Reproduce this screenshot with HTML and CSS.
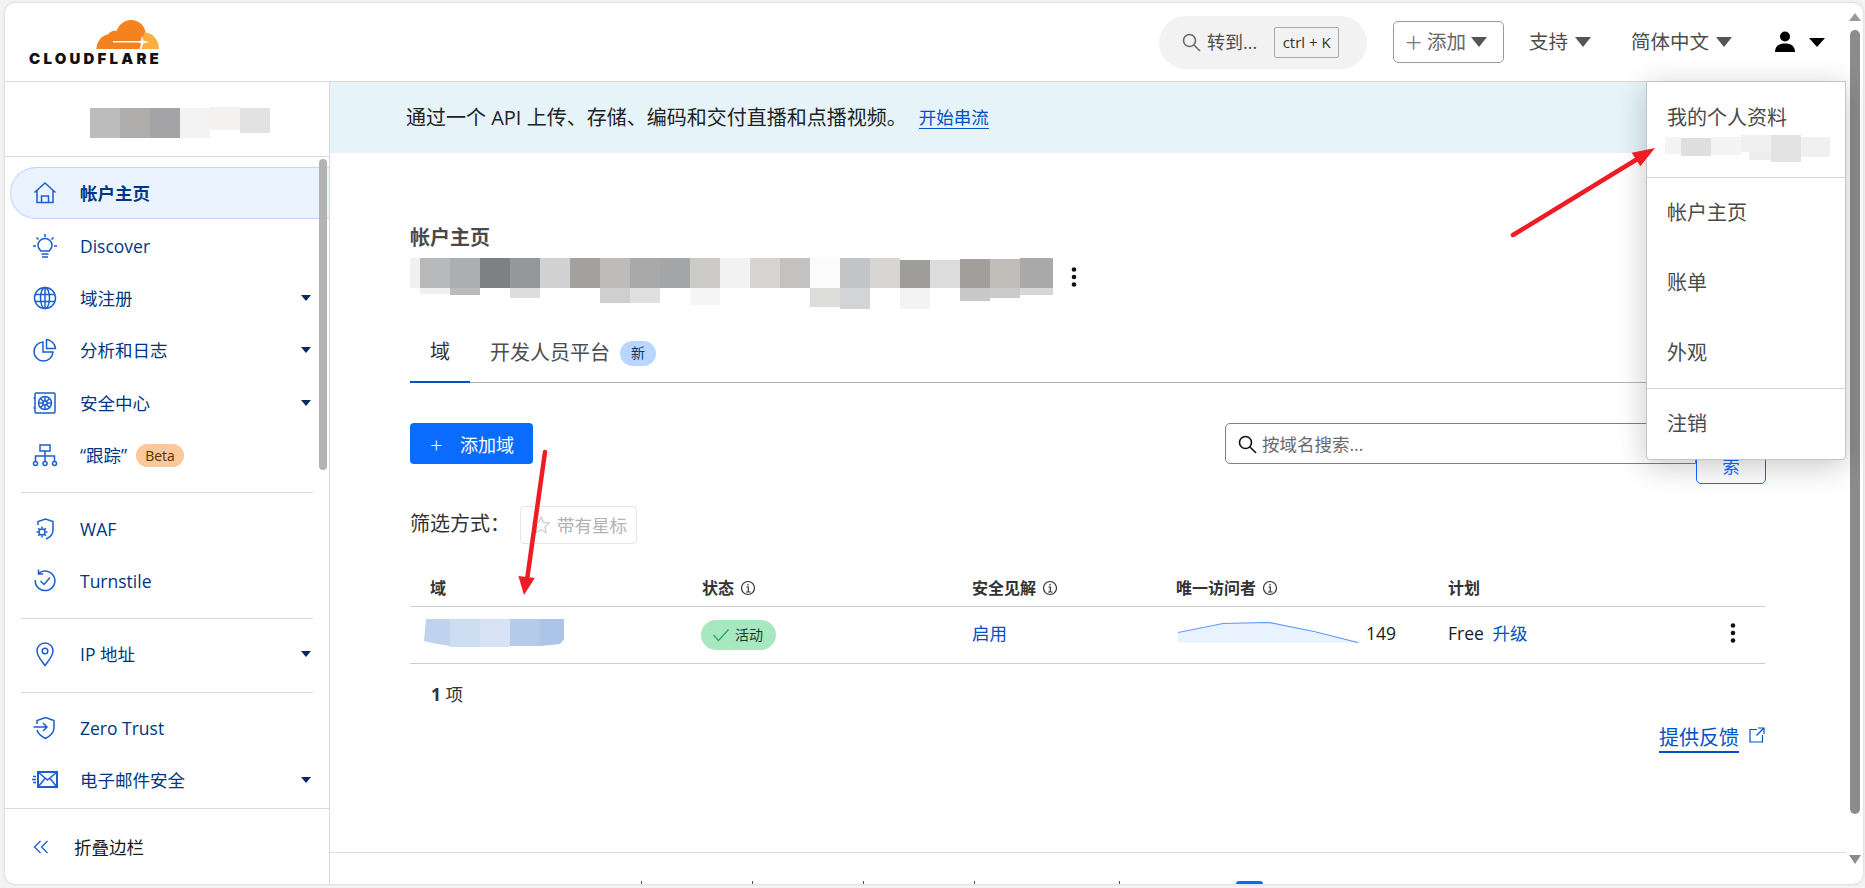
FILE: index.html
```html
<!DOCTYPE html>
<html lang="zh-CN">
<head>
    <meta charset="UTF-8">
    <title>Cloudflare</title>
    <link rel="stylesheet" href="styles.css">
</head>
<body>
    <div class="window">
        <div class="page">
            <div class="header">
                <div class="logo">
                    <svg class="logo-cloud" viewBox="0 0 63 29">
                        <path fill="#f6821f" d="M.4 29C.8 22 5 15.500 12 14.600 14 11.500 17.500 10.200 20.500 11.200 23 4.500 28.500 0 35.200 0 42.500 0 48 5 49.500 11.500L46.500 20.500 44.500 29Z"/>
                        <path fill="#fbad41" d="M48.500 12.500C56.500 12.500 63 20 63 29H43.500L45.300 24.500 50 21.800 46 20.200Z"/>
                        <path fill="none" stroke="#fff" stroke-width="1.500" d="M17 21.800H43.500"/>
                        <path fill="#fff" d="M46 15.500 47.200 20.600 53 22 47.200 23.400 45.500 29H43.600L45 23.400 42 22 45 20.600Z"/>
                    </svg>
                    <span class="logo-text">CLOUDFLARE</span>
                </div>
                <div class="tools">
                    <div class="quick-search">
                        <svg class="ic-search" viewBox="0 0 20 20"><circle cx="8.500" cy="8.500" r="6"/><path d="M13 13l6 6"/></svg>
                        <span class="quick-label">转到...</span>
                        <span class="kbd">ctrl + K</span>
                    </div>
                    <div class="add-btn"><span class="add-plus">+</span>添加<i class="caret-grey"></i></div>
                    <div class="tool-link">支持<i class="caret-grey"></i></div>
                    <div class="tool-link">简体中文<i class="caret-grey"></i></div>
                    <div class="tool-user">
                        <svg viewBox="0 0 22 22"><circle cx="11" cy="5.500" r="5"/><path d="M1 21c0-6 4-8.500 10-8.500s10 2.500 10 8.500z"/></svg>
                        <i class="caret-black"></i>
                    </div>
                </div>
            </div>

            <div class="body-row">
                <div class="sidebar">
                    <div class="account">
                        <svg width="180" height="32" viewBox="0 0 180 32">
                            <rect x="0" y="1" width="30" height="30" fill="#bcbcbc"/>
                            <rect x="30" y="1" width="30" height="30" fill="#aeadab"/>
                            <rect x="60" y="1" width="30" height="30" fill="#a4a4a6"/>
                            <rect x="90" y="1" width="30" height="30" fill="#f3f3f3"/>
                            <rect x="120" y="0" width="30" height="23" fill="#f3f2f1"/>
                            <rect x="150" y="1" width="30" height="25" fill="#e2e2e2"/>
                        </svg>
                    </div>
                    <div class="nav">
                        <a class="nav-item active">
                            <svg class="nav-ic" viewBox="0 0 26 26"><path d="M2.500 12.500 13 3l10.500 9.500M5 10.500V22.500H21V10.500M9.500 22.500V16H16.500V22.500"/></svg>
                            帐户主页
                        </a>
                        <a class="nav-item">
                            <svg class="nav-ic" viewBox="0 0 26 26"><path d="M13 1v3M4.500 4.500 6.500 6.500M21.500 4.500 19.500 6.500M1 13h3M22 13h3M8.800 18c-1-2-2.800-2.800-2.800-5.500a7 7 0 0 1 14 0c0 2.700-1.800 3.500-2.800 5.500ZM9.500 21h7M10 24h6"/></svg>
                            Discover
                        </a>
                        <a class="nav-item">
                            <svg class="nav-ic" viewBox="0 0 26 26"><circle cx="13" cy="13" r="10.500"/><ellipse cx="13" cy="13" rx="4.500" ry="10.500"/><path d="M3 9.500H23M3 16.500H23M13 2.500V23.500"/></svg>
                            域注册<i class="caret"></i>
                        </a>
                        <a class="nav-item">
                            <svg class="nav-ic" viewBox="0 0 26 26"><path d="M11 5a9.500 9.500 0 1 0 10 10H11Z"/><path d="M14.500 2.500c4.500.5 8.500 4 9 9h-9Z"/></svg>
                            分析和日志<i class="caret"></i>
                        </a>
                        <a class="nav-item">
                            <svg class="nav-ic" viewBox="0 0 26 26"><rect x="3" y="3" width="20" height="20" rx="1"/><path d="M3 8H1.500M3 18H1.500"/><circle cx="13" cy="13" r="6.500"/><circle cx="13" cy="13" r="2"/><path d="M13 6.500v4.500M13 15v4.500M6.500 13H11M15 13h4.500M8.500 8.500l3 3M14.500 14.500l3 3M17.500 8.500l-3 3M11.500 14.500l-3 3"/></svg>
                            安全中心<i class="caret"></i>
                        </a>
                        <a class="nav-item">
                            <svg class="nav-ic" viewBox="0 0 26 26"><rect x="8" y="3" width="10" height="6"/><path d="M13 9V19M3.500 19V14H22.500V19"/><circle cx="3.500" cy="21.500" r="2"/><circle cx="13" cy="21.500" r="2"/><circle cx="22.500" cy="21.500" r="2"/></svg>
                            <span>“跟踪”</span><span class="beta">Beta</span>
                        </a>
                        <hr class="nav-rule">
                        <a class="nav-item">
                            <svg class="nav-ic" viewBox="0 0 26 26"><path d="M6 9V5.500L13.500 3l7.500 2.500V14c0 4.500-3.500 7.500-7 9"/><circle cx="10" cy="16" r="3"/><path d="M10 10.500v2M10 19.500v2M4.500 16h2M13.500 16h2M6.200 12.200l1.400 1.400M12.400 18.400l1.400 1.400M13.800 12.200l-1.400 1.400M7.600 18.400l-1.400 1.400"/></svg>
                            WAF
                        </a>
                        <a class="nav-item">
                            <svg class="nav-ic" viewBox="0 0 26 26"><path d="M6.500 5.500A9.800 9.800 0 1 1 3.300 12M6.500 1.500v4.500H11"/><path d="M8.500 13l3.500 3.500 6-7"/></svg>
                            Turnstile
                        </a>
                        <hr class="nav-rule">
                        <a class="nav-item">
                            <svg class="nav-ic" viewBox="0 0 26 26"><path d="M13 24.500C9 19 5 15 5 10a8 8 0 0 1 16 0c0 5-4 9-8 14.500Z"/><circle cx="13" cy="10" r="2.800"/></svg>
                            IP 地址<i class="caret"></i>
                        </a>
                        <hr class="nav-rule">
                        <a class="nav-item">
                            <svg class="nav-ic" viewBox="0 0 26 26"><path d="M5 9V5.500L13.500 2.500 22 5.500V13c0 5-4 8-8.500 10.500C9.500 21.500 6 18.500 5 15"/><path d="M1.500 12H15M11 8l4 4-4 4"/></svg>
                            Zero Trust
                        </a>
                        <a class="nav-item">
                            <svg class="nav-ic" viewBox="0 0 26 26"><rect x="6" y="5" width="19" height="15" fill="#fff" stroke-width="2"/><path d="M6 5l9.500 8L25 5M6 20l7-8.500M25 20l-7-8.500M1 9.500h3M0 12.500h4M1 15.500h3"/></svg>
                            电子邮件安全<i class="caret"></i>
                        </a>
                    </div>
                    <div class="collapse">
                        <svg class="collapse-ic" viewBox="0 0 16 14"><path d="M7.500 1 1.500 7l6 6M14.500 1l-6 6 6 6"/></svg>
                        折叠边栏
                    </div>
                    <div class="side-thumb"></div>
                </div>

                <div class="main">
                    <div class="banner">
                        <span>通过一个 API 上传、存储、编码和交付直播和点播视频。</span>
                        <a class="banner-link">开始串流</a>
                    </div>
                    <div class="content">
                        <div class="acct-title">帐户主页</div>
                        <div class="acct-row">
                            <svg width="645" height="51" viewBox="0 0 645 51">
                                <rect x="0" y="0" width="10" height="30" fill="#f2f1ef"/>
                                <rect x="10" y="0" width="30" height="30" fill="#b8b9ba"/>
                                <rect x="40" y="0" width="30" height="30" fill="#adaeaf"/>
                                <rect x="70" y="0" width="30" height="30" fill="#7f8083"/>
                                <rect x="100" y="0" width="30" height="30" fill="#95989a"/>
                                <rect x="130" y="0" width="30" height="30" fill="#d2d2d2"/>
                                <rect x="160" y="0" width="30" height="30" fill="#a2a19e"/>
                                <rect x="190" y="0" width="30" height="30" fill="#bdbcba"/>
                                <rect x="220" y="0" width="30" height="30" fill="#a9a9a9"/>
                                <rect x="250" y="0" width="30" height="30" fill="#a5a6a7"/>
                                <rect x="280" y="0" width="30" height="30" fill="#cbcac7"/>
                                <rect x="310" y="0" width="30" height="30" fill="#f2f2f2"/>
                                <rect x="340" y="0" width="30" height="30" fill="#d6d5d3"/>
                                <rect x="370" y="0" width="30" height="30" fill="#c3c2c0"/>
                                <rect x="400" y="0" width="30" height="30" fill="#fbfbfb"/>
                                <rect x="430" y="0" width="30" height="30" fill="#c3c4c6"/>
                                <rect x="460" y="0" width="30" height="30" fill="#d7d6d4"/>
                                <rect x="490" y="2" width="30" height="28" fill="#9f9e9b"/>
                                <rect x="520" y="2" width="30" height="28" fill="#dcdcdc"/>
                                <rect x="550" y="1" width="30" height="29" fill="#a09f9c"/>
                                <rect x="580" y="1" width="30" height="29" fill="#c1beba"/>
                                <rect x="610" y="0" width="33" height="30" fill="#a9a9a9"/>
                                <rect x="10" y="30" width="30" height="6" fill="#f0f0f0"/>
                                <rect x="40" y="30" width="30" height="7" fill="#bbbbbb"/>
                                <rect x="100" y="30" width="30" height="10" fill="#dddddd"/>
                                <rect x="190" y="30" width="30" height="15" fill="#cfcfcf"/>
                                <rect x="220" y="30" width="30" height="15" fill="#e0e0e0"/>
                                <rect x="280" y="30" width="30" height="17" fill="#f5f5f5"/>
                                <rect x="400" y="30" width="30" height="19" fill="#dcdcdb"/>
                                <rect x="430" y="30" width="30" height="21" fill="#d3d4d6"/>
                                <rect x="490" y="30" width="30" height="21" fill="#f3f3f3"/>
                                <rect x="550" y="30" width="30" height="13" fill="#c8c8c8"/>
                                <rect x="580" y="30" width="30" height="10" fill="#cbcbcb"/>
                                <rect x="610" y="30" width="33" height="7" fill="#d5d7d7"/>
                            </svg>
                            <svg class="kebab acct-kebab" viewBox="0 0 6 20"><circle cx="3" cy="2.500" r="2.300"/><circle cx="3" cy="10" r="2.300"/><circle cx="3" cy="17.500" r="2.300"/></svg>
                        </div>
                        <div class="tabs">
                            <div class="tab on">域</div>
                            <div class="tab">开发人员平台<span class="new-badge">新</span></div>
                        </div>
                        <div class="toolbar">
                            <button class="primary-btn"><span class="primary-plus">+</span>添加域</button>
                            <div class="search-group">
                                <div class="search-box">
                                    <svg class="ic-search dark" viewBox="0 0 20 20"><circle cx="8.500" cy="8.500" r="6"/><path d="M13 13l6 6"/></svg>
                                    <span>按域名搜索...</span>
                                </div>
                                <button class="search-btn">搜<br>索</button>
                            </div>
                        </div>
                        <div class="filters">
                            <span class="filter-label">筛选方式：</span>
                            <span class="star-btn">
                                <svg viewBox="0 0 20 20"><path d="M10 2l2.400 5.400 5.800.6-4.300 3.900 1.200 5.800L10 14.800l-5.100 2.900 1.200-5.800L1.800 8l5.800-.6z"/></svg>
                                带有星标
                            </span>
                        </div>
                        <table class="domains">
                            <colgroup>
                                <col class="col-domain"><col class="col-status"><col class="col-insight"><col class="col-visitors"><col class="col-plan">
                            </colgroup>
                            <thead>
                                <tr>
                                    <th class="first">域</th>
                                    <th>状态 <svg class="info" viewBox="0 0 16 16"><circle cx="8" cy="8" r="6.500"/><path d="M6.500 7H8.300V12M6 12H10.500M8 4v1.500"/></svg></th>
                                    <th>安全见解 <svg class="info" viewBox="0 0 16 16"><circle cx="8" cy="8" r="6.500"/><path d="M6.500 7H8.300V12M6 12H10.500M8 4v1.500"/></svg></th>
                                    <th>唯一访问者 <svg class="info" viewBox="0 0 16 16"><circle cx="8" cy="8" r="6.500"/><path d="M6.500 7H8.300V12M6 12H10.500M8 4v1.500"/></svg></th>
                                    <th>计划</th>
                                </tr>
                            </thead>
                            <tbody>
                                <tr>
                                    <td>
                                        <svg class="domain-blur" width="140" height="28" viewBox="0 0 140 28">
                                            <path fill="#bfd2ee" d="M2 0H26V27L8 24 0 22Z"/>
                                            <rect x="26" y="0" width="30" height="28" fill="#cdddf2"/>
                                            <rect x="56" y="0" width="30" height="28" fill="#d7e3f4"/>
                                            <rect x="86" y="0" width="30" height="27" fill="#b5cbea"/>
                                            <path fill="#abc4e8" d="M116 0H140V20L136 25 116 27Z"/>
                                        </svg>
                                    </td>
                                    <td>
                                        <span class="active-badge">
                                            <svg viewBox="0 0 18 14"><path d="M1.500 7l5 5.500L16.500 1.500"/></svg>
                                            活动
                                        </span>
                                    </td>
                                    <td class="raised"><a class="blue">启用</a></td>
                                    <td>
                                        <div class="visitors">
                                            <svg width="181" height="21" viewBox="0 0 181 21">
                                                <path fill="#e9f3ff" d="M0 10.500 45 1.500 91 .5 136 9.500 180 20.500H0Z"/>
                                                <path fill="none" stroke="#5b9bff" stroke-width="1.200" d="M0 10.500 45 1.500 91 .5 136 9.500 180 20.500"/>
                                            </svg>
                                            <span>149</span>
                                        </div>
                                    </td>
                                    <td class="raised">
                                        <div class="plan">
                                            <span>Free <a class="blue upgrade">升级</a></span>
                                            <svg class="kebab" viewBox="0 0 6 20"><circle cx="3" cy="2.500" r="2.300"/><circle cx="3" cy="10" r="2.300"/><circle cx="3" cy="17.500" r="2.300"/></svg>
                                        </div>
                                    </td>
                                </tr>
                            </tbody>
                        </table>
                        <div class="count"><b>1</b> 项</div>
                        <div class="feedback">
                            <a class="feedback-link">提供反馈</a>
                            <svg class="ext" viewBox="0 0 16 16"><path d="M8 2.500H1V15H13.500V8M9 1H15V7M15 1 7.500 8.500"/></svg>
                        </div>
                    </div>
                    <div class="footer">
                        <span class="foot-link first-foot">联系支持</span>
                        <span class="foot-link">系统状态</span>
                        <span class="foot-link">条款</span>
                        <span class="foot-link">隐私</span>
                        <span class="foot-link wide-foot">Cookie 首选项</span>
                        <span class="foot-badge"></span>
                    </div>
                </div>
            </div>

            <div class="menu">
                <div class="menu-group">
                    <div class="menu-profile">我的个人资料</div>
                    <svg class="menu-blur" width="165" height="27" viewBox="0 0 165 27">
                        <rect x="0" y="2" width="16" height="17" fill="#f4f4f4"/>
                        <rect x="16" y="3" width="30" height="18" fill="#dfdfdf"/>
                        <rect x="46" y="2" width="30" height="18" fill="#f4f4f4"/>
                        <rect x="76" y="0" width="30" height="17" fill="#f0f0f0"/>
                        <rect x="84" y="17" width="22" height="8" fill="#ededed"/>
                        <rect x="106" y="0" width="30" height="27" fill="#e3e3e3"/>
                        <rect x="136" y="2" width="29" height="20" fill="#f0f0f0"/>
                    </svg>
                </div>
                <div class="menu-group mid">
                    <div class="menu-item">帐户主页</div>
                    <div class="menu-item">账单</div>
                    <div class="menu-item">外观</div>
                </div>
                <div class="menu-group">
                    <div class="menu-item">注销</div>
                </div>
            </div>
        </div>

        <div class="scrollbar">
            <i class="sb-up"></i>
            <div class="sb-thumb"></div>
            <i class="sb-down"></i>
        </div>
    </div>

    <svg class="arrows" width="1865" height="888" viewBox="0 0 1865 888">
        <path d="M1513 235 1639 158" stroke="#ee1c25" stroke-width="4.500" stroke-linecap="round"/>
        <path d="M1655 148 1640.300 166.300 1631.800 152.700Z" fill="#ee1c25"/>
        <path d="M545 452 527 580" stroke="#ee1c25" stroke-width="4.500" stroke-linecap="round"/>
        <path d="M524 595 534.800 578 518.400 576Z" fill="#ee1c25"/>
    </svg>
</body>
</html>
```

FILE: styles.css
```css
* {
    box-sizing: border-box;
}
body {
    margin: 0;
    height: 888px;
    overflow: hidden;
    background-color: #f3f3f3;
    font-family: "Open Sans", "Noto Sans CJK SC", sans-serif;
    font-size: 17.5px;
    line-height: 24px;
    color: #1a1a1a;
}
a {
    text-decoration: none;
}
.window {
    display: flex;
    width: 1858px;
    height: 881px;
    margin: 3px 0 0 5px;
    background: #fff;
    border-radius: 10px;
    overflow: hidden;
    box-shadow: 0 0 3px rgba(0, 0, 0, 0.18);
}
.page {
    position: relative;
    display: flex;
    flex-direction: column;
    flex: 1;
    min-width: 0;
}

/* header */
.header {
    display: flex;
    align-items: center;
    flex: none;
    height: 79px;
    padding: 0 21px;
    border-bottom: 1px solid #d9d9d9;
}
.logo {
    display: flex;
    flex-direction: column;
    align-items: flex-end;
    width: 133px;
    margin-top: 1px;
}
.logo-cloud {
    display: block;
    width: 63px;
    height: 29px;
}
.logo-text {
    margin-top: 3px;
    margin-right: -3px;
    font-family: "Inter", "Liberation Sans", sans-serif;
    font-size: 15px;
    font-weight: 900;
    line-height: 14px;
    letter-spacing: 3.2px;
    white-space: nowrap;
    color: #111;
}
.tools {
    display: flex;
    align-items: center;
    margin-left: auto;
    color: #4d4d4d;
}
.quick-search {
    display: flex;
    align-items: center;
    width: 208px;
    height: 53px;
    padding-left: 22px;
    background: #f2f2f2;
    border-radius: 27px;
}
.ic-search {
    width: 20px;
    height: 20px;
    fill: none;
    stroke: #6a6a6a;
    stroke-width: 1.600;
}
.ic-search.dark {
    stroke: #111;
}
.quick-label {
    margin-left: 6px;
    font-size: 18px;
}
.kbd {
    display: flex;
    align-items: center;
    justify-content: center;
    width: 65px;
    height: 31px;
    margin-left: 17px;
    border: 1px solid #aaa;
    border-radius: 2px;
    font-size: 15px;
    color: #333;
}
.add-btn {
    display: flex;
    align-items: center;
    width: 111px;
    height: 42px;
    margin-left: 26px;
    padding-left: 11px;
    border: 1px solid #999;
    border-radius: 5px;
    font-size: 19.500px;
    color: #666;
}
.add-plus {
    margin-right: 5px;
    font-size: 30px;
    font-weight: 300;
    color: #777;
}
.tool-link {
    display: flex;
    align-items: center;
    margin-left: 40px;
    font-size: 19.500px;
}
.add-btn + .tool-link {
    margin-left: 25px;
}
.caret-grey {
    width: 0;
    height: 0;
    margin-left: 5px;
    border-left: 8.500px solid transparent;
    border-right: 8.500px solid transparent;
    border-top: 10px solid #555;
}
.tool-link .caret-grey {
    margin-left: 7px;
}
.tool-user {
    display: flex;
    align-items: center;
    margin-left: 42px;
}
.tool-user svg {
    width: 22px;
    height: 22px;
    fill: #000;
}
.caret-black {
    width: 0;
    height: 0;
    margin-left: 13px;
    border-left: 8.500px solid transparent;
    border-right: 8.500px solid transparent;
    border-top: 9px solid #000;
}

/* sidebar */
.body-row {
    display: flex;
    flex: 1;
    min-height: 0;
}
.sidebar {
    position: relative;
    display: flex;
    flex-direction: column;
    flex: none;
    width: 325px;
    border-right: 1px solid #d9d9d9;
}
.account {
    display: flex;
    flex: none;
    height: 75px;
    padding: 25px 0 0 85px;
    border-bottom: 1px solid #d9d9d9;
}
.nav {
    flex: 1;
    min-height: 0;
    padding-top: 10px;
    overflow: hidden;
}
.nav-item {
    display: flex;
    align-items: center;
    height: 52.400px;
    padding: 0 18px 0 27px;
    color: #003681;
}
.nav-item.active {
    margin-left: 5px;
    padding-left: 21px;
    background: #eaf3ff;
    border: 1px solid #bcd8ff;
    border-right: 0;
    border-radius: 26px 0 0 26px;
    font-weight: 700;
}
.nav-ic {
    flex: none;
    width: 26px;
    height: 26px;
    margin-right: 22px;
    fill: none;
    stroke: #1b5fcf;
    stroke-width: 1.500;
}
.caret {
    width: 0;
    height: 0;
    margin-left: auto;
    border-left: 5.500px solid transparent;
    border-right: 5.500px solid transparent;
    border-top: 6px solid #0b2a5e;
}
.beta {
    display: inline-block;
    height: 23px;
    margin-left: 9px;
    padding: 0 9px;
    background: #f9c99c;
    border-radius: 12px;
    font-size: 14px;
    line-height: 23px;
    color: #5c2d00;
}
.nav-rule {
    height: 1px;
    margin: 11px 16px 9px;
    border: 0;
    background: #d9d9d9;
}
.collapse {
    display: flex;
    align-items: center;
    flex: none;
    height: 76px;
    padding-left: 28px;
    border-top: 1px solid #d9d9d9;
    color: #1a1a1a;
}
.collapse-ic {
    width: 16px;
    height: 14px;
    margin-right: 25px;
    fill: none;
    stroke: #1b5fcf;
    stroke-width: 1.300;
}
.side-thumb {
    position: absolute;
    top: 77px;
    right: 2px;
    width: 8px;
    height: 311px;
    background: #b3b3b3;
    border-radius: 4px;
}

/* main */
.main {
    display: flex;
    flex-direction: column;
    flex: 1;
    min-width: 0;
}
.banner {
    display: flex;
    align-items: center;
    flex: none;
    height: 71px;
    padding-left: 76px;
    background: #e6f4fa;
    font-size: 20px;
    color: #222;
}
.banner-link {
    margin-left: 12px;
    font-size: 17.500px;
    line-height: 22px;
    color: #0051c3;
    border-bottom: 1.500px solid #0051c3;
}
.content {
    flex: 1;
    min-height: 0;
    padding: 72px 81px 0 80px;
}
.acct-title {
    height: 26px;
    font-size: 20px;
    font-weight: 700;
    line-height: 26px;
    color: #4a4a4a;
}
.acct-row {
    display: flex;
    align-items: flex-start;
    height: 51px;
    margin-top: 7px;
}
.kebab {
    width: 6px;
    height: 20px;
    fill: #111;
}
.acct-kebab {
    margin: 9px 0 0 16px;
}
.tabs {
    display: flex;
    height: 53px;
    margin-top: 21px;
    padding-top: 7px;
    border-bottom: 1px solid #b3b3b3;
    font-size: 20px;
    color: #4d4d4d;
}
.tab {
    display: flex;
    align-items: center;
    height: 46px;
    padding: 0 20px 14px;
}
.tab.on {
    width: 60px;
    border-bottom: 2px solid #0051c3;
    color: #333;
}
.new-badge {
    display: flex;
    align-items: center;
    justify-content: center;
    width: 36px;
    height: 25px;
    margin-left: 10px;
    background: #b9d6ff;
    border-radius: 13px;
    font-size: 14px;
    color: #10366f;
}
.toolbar {
    display: flex;
    justify-content: space-between;
    align-items: flex-start;
    height: 61px;
    margin-top: 40px;
}
.primary-btn {
    display: flex;
    align-items: center;
    width: 123px;
    height: 41px;
    padding: 0 0 0 20px;
    border: 0;
    border-radius: 4px;
    background: #0a6cff;
    font-family: inherit;
    font-size: 18px;
    color: #fff;
}
.primary-plus {
    width: 30px;
    font-size: 22px;
    font-weight: 300;
    text-align: left;
}
.search-group {
    display: flex;
}
.search-box {
    display: flex;
    align-items: center;
    width: 471px;
    height: 41px;
    padding-left: 11px;
    border: 1px solid #808080;
    border-radius: 5px 0 0 5px;
    color: #6a6a6a;
}
.search-box span {
    margin-left: 5px;
}
.search-btn {
    width: 70px;
    height: 61px;
    margin-right: -1px;
    padding: 0;
    background: #fff;
    border: 1px solid #0a6cff;
    border-radius: 0 0 5px 5px;
    font-family: inherit;
    font-size: 17.500px;
    line-height: 24px;
    color: #0a6cff;
}
.filters {
    display: flex;
    align-items: center;
    height: 38px;
    margin-top: 22px;
}
.filter-label {
    width: 110px;
    margin-top: -2px;
    font-size: 20px;
    color: #333;
}
.star-btn {
    display: flex;
    align-items: center;
    width: 117px;
    height: 38px;
    padding-left: 10px;
    border: 1px solid #e6e6e6;
    border-radius: 4px;
    color: #b3b3b3;
}
.star-btn svg {
    width: 20px;
    height: 20px;
    margin-right: 6px;
    fill: none;
    stroke: #ccc;
    stroke-width: 1.300;
}
.domains {
    width: 1355px;
    margin-top: 26px;
    border-collapse: collapse;
    table-layout: fixed;
}
.col-domain {
    width: 292px;
}
.col-status {
    width: 270px;
}
.col-insight {
    width: 204px;
}
.col-visitors {
    width: 272px;
}
.domains th {
    height: 36px;
    padding: 0;
    border-bottom: 1px solid #ccc;
    font-size: 16px;
    font-weight: 700;
    text-align: left;
    color: #333;
}
.domains th.first {
    padding-left: 20px;
}
.domains td {
    height: 57px;
    padding: 0;
    border-bottom: 1px solid #ccc;
    color: #1a1a1a;
}
.domains td.raised {
    padding-bottom: 3px;
}
.info {
    width: 16px;
    height: 16px;
    margin-left: 2px;
    vertical-align: -2px;
    fill: none;
    stroke: #333;
    stroke-width: 1.200;
}
.domain-blur {
    display: block;
    margin: -4px 0 0 14px;
}
.active-badge {
    display: inline-flex;
    align-items: center;
    width: 75px;
    height: 30px;
    margin-left: -1px;
    padding-left: 11px;
    background: #a8e8c0;
    border-radius: 15px;
    font-size: 14px;
    color: #1f3b2a;
}
.active-badge svg {
    width: 18px;
    height: 14px;
    margin-right: 5px;
    fill: none;
    stroke: #2da562;
    stroke-width: 1.300;
}
.blue {
    color: #0051c3;
}
.visitors {
    display: flex;
    align-items: flex-end;
    margin-left: 2px;
    margin-top: -7px;
}
.visitors span {
    margin-left: 7px;
    line-height: 24px;
    transform: translateY(2px);
}
.plan {
    display: flex;
    justify-content: space-between;
    align-items: center;
    padding-right: 29px;
}
.upgrade {
    margin-left: 4px;
}
.count {
    margin-top: 18px;
    padding-left: 21px;
    color: #333;
}
.feedback {
    display: flex;
    justify-content: flex-end;
    align-items: flex-start;
    margin-top: 19px;
}
.feedback-link {
    font-size: 20px;
    line-height: 26px;
    color: #0051c3;
    border-bottom: 2px solid #0051c3;
}
.ext {
    width: 16px;
    height: 16px;
    margin: 2px 0 0 10px;
    fill: none;
    stroke: #0051c3;
    stroke-width: 1.200;
}
.footer {
    display: flex;
    flex: none;
    height: 32px;
    padding: 28px 0 0 200px;
    border-top: 1px solid #d9d9d9;
    overflow: hidden;
    font-size: 14px;
    line-height: 20px;
    color: #555;
}
.foot-link {
    width: 111px;
    height: 20px;
    padding-top: 1px;
    border-left: 1px solid #555;
    text-align: center;
}
.first-foot {
    width: 111px;
    border-left: 0;
}
.wide-foot {
    width: 146px;
    border-right: 1px solid #555;
}
.foot-badge {
    width: 27px;
    height: 20px;
    margin-left: 116px;
    background: #0a6cff;
    border-radius: 3px;
}

/* account menu */
.menu {
    position: absolute;
    top: 78px;
    right: 0;
    z-index: 5;
    width: 200px;
    height: 379px;
    background: #fff;
    border: 1px solid #c4c4c4;
    border-radius: 0 0 4px 4px;
    box-shadow: 0 6px 30px rgba(0, 0, 0, 0.22);
    font-size: 20px;
    color: #4a4a4a;
}
.menu-group {
    padding: 0 20px;
}
.menu-group:first-child {
    height: 95px;
    padding-top: 23px;
}
.menu-group.mid {
    height: 212px;
    border-top: 1px solid #d4d4d4;
    border-bottom: 1px solid #d4d4d4;
}
.menu-profile {
    line-height: 26px;
}
.menu-blur {
    display: block;
    margin: 4px 0 0 -2px;
}
.menu-item {
    display: flex;
    align-items: center;
    height: 70px;
}

/* scrollbar */
.scrollbar {
    display: flex;
    flex-direction: column;
    align-items: center;
    flex: none;
    width: 17px;
    padding-top: 10px;
}
.sb-thumb {
    width: 10px;
    height: 784px;
    margin-top: 9px;
    background: #8c8c8c;
    border-radius: 5px;
}
.sb-up {
    width: 0;
    height: 0;
    border-left: 6px solid transparent;
    border-right: 6px solid transparent;
    border-bottom: 8px solid #9a9a9a;
}
.sb-down {
    width: 0;
    height: 0;
    margin-top: 41px;
    border-left: 6px solid transparent;
    border-right: 6px solid transparent;
    border-top: 9px solid #8c8c8c;
}

.arrows {
    position: absolute;
    top: 0;
    left: 0;
    z-index: 10;
    pointer-events: none;
}
```
